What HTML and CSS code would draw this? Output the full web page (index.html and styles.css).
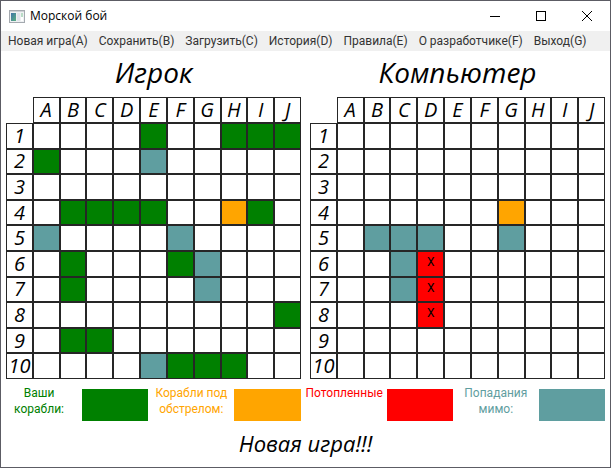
FILE: index.html
```html
<!DOCTYPE html>
<html lang="ru">
<head>
<meta charset="utf-8">
<title>Морской бой</title>
<link rel="stylesheet" href="styles.css">
</head>
<body>
<div class="window">
  <header class="titlebar">
    <svg class="app-icon" width="16" height="13" viewBox="0 0 16 13" aria-hidden="true">
      <defs><linearGradient id="pane" x1="0" y1="0" x2="1" y2="1"><stop offset="0" stop-color="#3f73a8"/><stop offset="1" stop-color="#59b080"/></linearGradient></defs>
      <rect x=".5" y=".5" width="15" height="12" fill="#eef0f2" stroke="#a4a9af"/>
      <rect x="1" y="1" width="14" height="1" fill="#cdd1d5"/>
      <rect x="2" y="3" width="5" height="8" fill="url(#pane)"/>
      <rect x="8" y="3" width="3" height="8" fill="#dfe3ea"/>
      <rect x="12" y="3" width="2" height="4" fill="#b9dcc6"/>
      <rect x="12" y="7" width="2" height="4" fill="#fff"/>
    </svg>
    <span class="app-name">Морской бой</span>
    <button class="win-btn" type="button" aria-label="Свернуть"><svg width="10" height="10" viewBox="0 0 10 10"><path d="M0 5.5H10"/></svg></button>
    <button class="win-btn" type="button" aria-label="Развернуть"><svg width="10" height="10" viewBox="0 0 10 10"><path d="M.5 .5H9.5V9.5H.5Z"/></svg></button>
    <button class="win-btn" type="button" aria-label="Закрыть"><svg class="smooth" width="10" height="10" viewBox="0 0 10 10"><path d="M0 0L10 10M10 0L0 10"/></svg></button>
  </header>
  <nav class="menu">
    <button type="button">Новая игра(A)</button>
    <button type="button">Сохранить(B)</button>
    <button type="button">Загрузить(C)</button>
    <button type="button">История(D)</button>
    <button type="button">Правила(E)</button>
    <button type="button">О разработчике(F)</button>
    <button type="button">Выход(G)</button>
  </nav>
  <main>
    <div class="fields">
      <section class="field">
        <h2>Игрок</h2>
        <table class="board" id="player"></table>
      </section>
      <section class="field">
        <h2>Компьютер</h2>
        <table class="board" id="computer"></table>
      </section>
    </div>
    <div class="legend">
      <span class="label own">Ваши корабли:</span><span class="swatch ship"></span>
      <span class="label fire">Корабли под обстрелом:</span><span class="swatch hit"></span>
      <span class="label dead">Потопленные</span><span class="swatch sunk"></span>
      <span class="label past">Попадания мимо:</span><span class="swatch miss"></span>
    </div>
    <p class="status">Новая игра!!!</p>
  </main>
</div>
<script src="board.js"></script>
</body>
</html>
```
FILE: styles.css
```css
* { box-sizing: border-box; }

body {
  margin: 0;
  font: 12px/16px "Segoe UI", Roboto, "Open Sans", sans-serif;
  color: #000;
  background: #fff;
}

button {
  padding: 0;
  border: 0;
  background: none;
  font: inherit;
  color: inherit;
}

.window {
  min-height: 100vh;
  border: 1px solid #5c5c64;
}

.titlebar {
  display: flex;
  align-items: center;
  height: 30px;
  padding-left: 8px;
}

.app-icon { margin-right: 5px; }

.app-name {
  flex: 1;
  font-family: "Segoe UI", "Open Sans", sans-serif;
}

.win-btn {
  display: flex;
  align-items: center;
  justify-content: center;
  width: 46px;
  height: 30px;
}

.win-btn path {
  fill: none;
  stroke: #000;
  shape-rendering: crispEdges;
}

.win-btn .smooth path { shape-rendering: auto; }

.menu {
  display: flex;
  gap: 11px;
  height: 20px;
  padding: 0 7px;
  background: #f0f0f0;
  color: #333;
  white-space: nowrap;
}

.fields {
  display: grid;
  grid-template-columns: 1fr 1fr;
  gap: 9px;
  padding: 0 5px;
}

h2,
.status,
.board th {
  font-family: "Segoe Print", "Open Sans", "Noto Sans", sans-serif;
  font-style: italic;
  font-weight: 400;
}

h2 {
  margin: 0;
  height: 46px;
  font-size: 28px;
  line-height: 42px;
  text-align: center;
}

.board {
  width: 100%;
  height: 282px;
  table-layout: fixed;
  border-collapse: separate;
  border-spacing: 0;
}

.board th,
.board td {
  padding: 0;
  border: 1px solid #262626;
  text-align: center;
}

.board .corner { border: 0; }

.board th {
  font-size: 20px;
  line-height: 20px;
}

.board thead th { height: 26px; }

.board td {
  vertical-align: top;
  line-height: 20px;
}

.ship { background: #008000; }
.hit { background: #ffa500; }
.sunk { background: #f00; }
.miss { background: #5f9ea0; }

.legend {
  display: grid;
  grid-template-columns: repeat(8, minmax(0, 1fr));
  padding-top: 6px;
}

.label { text-align: center; }
.own { color: #008000; }
.fire { color: #ffa500; }
.dead { color: #f00; }
.past { color: #5f9ea0; }

.swatch {
  height: 32px;
  margin: 4px 5px 0;
}

.status {
  margin: 0;
  font-size: 22px;
  line-height: 44px;
  text-align: center;
}
```
FILE: board.js
```js
const letters = "ABCDEFGHIJ";

// One string per row: s = ship, h = hit, x = sunk, m = miss
const boards = {
  player: [
    "....s..sss",
    "s...m.....",
    "..........",
    ".ssss..hs.",
    "m....m....",
    ".s...sm...",
    ".s....m...",
    ".........s",
    ".ss.......",
    "....msss.."
  ],
  computer: [
    "..........",
    "..........",
    "..........",
    "......h...",
    ".mmm..m...",
    "..mx......",
    "..mx......",
    "...x......",
    "..........",
    ".........."
  ]
};

const kinds = { s: "ship", h: "hit", x: "sunk", m: "miss" };

for (const [id, rows] of Object.entries(boards)) {
  const head = '<tr><td class="corner"></td>' +
    [...letters].map(l => `<th scope="col">${l}</th>`).join("") + "</tr>";
  const body = rows.map((row, i) => `<tr><th scope="row">${i + 1}</th>` +
    [...row].map(c => `<td class="${kinds[c] || ""}">${c === "x" ? "X" : ""}</td>`).join("") +
    "</tr>").join("");
  document.getElementById(id).innerHTML = `<thead>${head}</thead><tbody>${body}</tbody>`;
}
```
